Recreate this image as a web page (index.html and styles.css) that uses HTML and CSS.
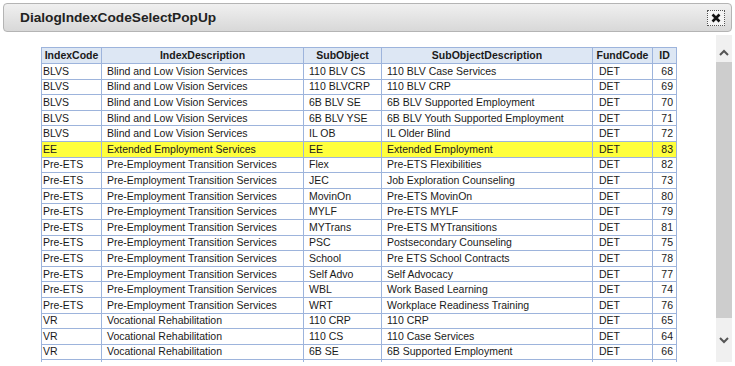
FILE: index.html
```html
<!DOCTYPE html>
<html>
<head>
<meta charset="utf-8">
<link rel="stylesheet" href="styles.css">
</head>
<body>
<div class="dialog">
  <div class="titlebar">
    <span class="title">DialogIndexCodeSelectPopUp</span>
    <span class="close"><svg width="10" height="10" viewBox="0 0 10 10"><path d="M1.5 1.5 L8.5 8.5 M8.5 1.5 L1.5 8.5" stroke="#111" stroke-width="2.6" stroke-linecap="butt"/></svg></span>
  </div>
  <div class="content">
    <div class="tablewrap">
      <table class="grid">
        <thead>
          <tr><th class="c1">IndexCode</th><th class="c2">IndexDescription</th><th class="c3">SubObject</th><th class="c4">SubObjectDescription</th><th class="c5">FundCode</th><th class="c6">ID</th></tr>
        </thead>
        <tbody>
          <tr><td>BLVS</td><td>Blind and Low Vision Services</td><td>110 BLV CS</td><td>110 BLV Case Services</td><td>DET</td><td>68</td></tr>
          <tr><td>BLVS</td><td>Blind and Low Vision Services</td><td>110 BLVCRP</td><td>110 BLV CRP</td><td>DET</td><td>69</td></tr>
          <tr><td>BLVS</td><td>Blind and Low Vision Services</td><td>6B BLV SE</td><td>6B BLV Supported Employment</td><td>DET</td><td>70</td></tr>
          <tr><td>BLVS</td><td>Blind and Low Vision Services</td><td>6B BLV YSE</td><td>6B BLV Youth Supported Employment</td><td>DET</td><td>71</td></tr>
          <tr><td>BLVS</td><td>Blind and Low Vision Services</td><td>IL OB</td><td>IL Older Blind</td><td>DET</td><td>72</td></tr>
          <tr class="sel"><td>EE</td><td>Extended Employment Services</td><td>EE</td><td>Extended Employment</td><td>DET</td><td>83</td></tr>
          <tr><td>Pre-ETS</td><td>Pre-Employment Transition Services</td><td>Flex</td><td>Pre-ETS Flexibilities</td><td>DET</td><td>82</td></tr>
          <tr><td>Pre-ETS</td><td>Pre-Employment Transition Services</td><td>JEC</td><td>Job Exploration Counseling</td><td>DET</td><td>73</td></tr>
          <tr><td>Pre-ETS</td><td>Pre-Employment Transition Services</td><td>MovinOn</td><td>Pre-ETS MovinOn</td><td>DET</td><td>80</td></tr>
          <tr><td>Pre-ETS</td><td>Pre-Employment Transition Services</td><td>MYLF</td><td>Pre-ETS MYLF</td><td>DET</td><td>79</td></tr>
          <tr><td>Pre-ETS</td><td>Pre-Employment Transition Services</td><td>MYTrans</td><td>Pre-ETS MYTransitions</td><td>DET</td><td>81</td></tr>
          <tr><td>Pre-ETS</td><td>Pre-Employment Transition Services</td><td>PSC</td><td>Postsecondary Counseling</td><td>DET</td><td>75</td></tr>
          <tr><td>Pre-ETS</td><td>Pre-Employment Transition Services</td><td>School</td><td>Pre ETS School Contracts</td><td>DET</td><td>78</td></tr>
          <tr><td>Pre-ETS</td><td>Pre-Employment Transition Services</td><td>Self Advo</td><td>Self Advocacy</td><td>DET</td><td>77</td></tr>
          <tr><td>Pre-ETS</td><td>Pre-Employment Transition Services</td><td>WBL</td><td>Work Based Learning</td><td>DET</td><td>74</td></tr>
          <tr><td>Pre-ETS</td><td>Pre-Employment Transition Services</td><td>WRT</td><td>Workplace Readiness Training</td><td>DET</td><td>76</td></tr>
          <tr><td>VR</td><td>Vocational Rehabilitation</td><td>110 CRP</td><td>110 CRP</td><td>DET</td><td>65</td></tr>
          <tr><td>VR</td><td>Vocational Rehabilitation</td><td>110 CS</td><td>110 Case Services</td><td>DET</td><td>64</td></tr>
          <tr><td>VR</td><td>Vocational Rehabilitation</td><td>6B SE</td><td>6B Supported Employment</td><td>DET</td><td>66</td></tr>
          <tr class="spacer"><td></td><td></td><td></td><td></td><td></td><td></td></tr>
        </tbody>
      </table>
    </div>
    <div class="scrollbar">
      <span class="arrow up"><svg width="10" height="7" viewBox="0 0 10 7"><path d="M1 6 L5 2 L9 6" fill="none" stroke="#555" stroke-width="2"/></svg></span>
      <span class="thumb"></span>
      <span class="arrow down"><svg width="10" height="7" viewBox="0 0 10 7"><path d="M1 1 L5 5 L9 1" fill="none" stroke="#555" stroke-width="2"/></svg></span>
    </div>
  </div>
</div>
</body>
</html>
```

FILE: styles.css
```css
html, body {
  margin: 0;
  padding: 0;
  background: #ffffff;
  overflow: hidden;
}

.dialog {
  width: 735px;
  height: 366px;
  padding: 3px 3px 4px 3px;
  box-sizing: border-box;
  display: flex;
  flex-direction: column;
  overflow: hidden;
}

.titlebar {
  height: 29px;
  box-sizing: border-box;
  border: 1px solid #b4b4b4;
  border-radius: 4px;
  background: linear-gradient(#f0f0f0, #d8d8d8);
  display: flex;
  align-items: center;
  justify-content: space-between;
  padding: 0 6px 0 16px;
  flex: none;
}

.title {
  font-family: "Liberation Sans", Arial, sans-serif;
  font-weight: bold;
  font-size: 13.7px;
  color: #222;
}

.close {
  width: 18px;
  height: 16px;
  box-sizing: border-box;
  border: 1px dotted #555;
  display: flex;
  align-items: center;
  justify-content: center;
  background: #f4f4f4;
}

.content {
  flex: 1;
  display: flex;
  min-height: 0;
}

.tablewrap {
  flex: 1;
  padding: 15px 0 0 38px;
  overflow: hidden;
}

.grid {
  border-collapse: collapse;
  table-layout: fixed;
  width: 635px;
  font-family: "Liberation Sans", Arial, sans-serif;
  font-size: 10.5px;
  color: #1a1a1a;
}

.grid th, .grid td {
  border: 1px solid #9db4dc;
  height: 14.6px;
  padding: 0 5px;
  white-space: nowrap;
  overflow: hidden;
  line-height: 13px;
}

.grid th {
  background: #dde7f4;
  font-weight: bold;
  text-align: center;
  height: 15px;
  padding: 0 1px;
}

.grid td:first-child { padding-left: 1px; }
.grid td:nth-child(5) { padding-left: 6px; }
.grid td:last-child { text-align: right; padding-right: 3px; }

.c1 { width: 57px; }
.c2 { width: 199px; }
.c3 { width: 75px; }
.c4 { width: 208px; }
.c5 { width: 57px; }
.c6 { width: 21px; }

.grid tr.sel td { background: #ffff3c; }

.scrollbar {
  width: 16px;
  margin: 3px 0 0 8px;
  background: #f0f0f0;
  display: flex;
  flex-direction: column;
  flex: none;
}

.arrow {
  display: flex;
  justify-content: center;
  flex: none;
}

.arrow.up {
  height: 27px;
  align-items: flex-end;
  padding-bottom: 6px;
  box-sizing: border-box;
}

.arrow.down {
  height: 44px;
  align-items: center;
}

.thumb {
  flex: 1;
  background: #cdcdcd;
}
```
